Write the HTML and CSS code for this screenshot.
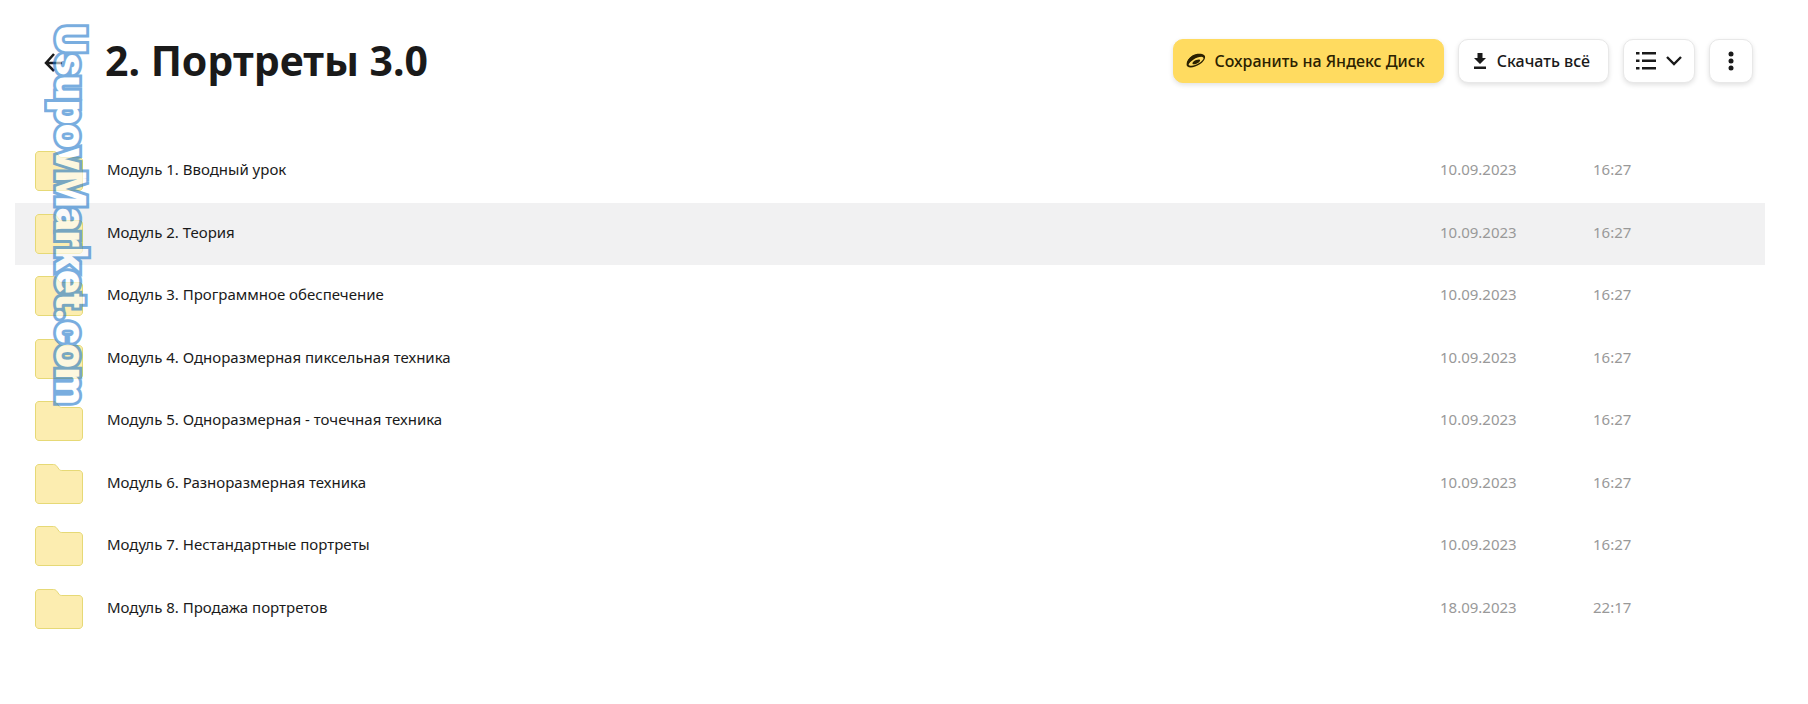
FILE: index.html
```html
<!DOCTYPE html>
<html lang="ru">
<head>
<meta charset="UTF-8">
<title>2. Портреты 3.0</title>
<link rel="stylesheet" href="styles.css">
</head>
<body>

<svg class="sprite" aria-hidden="true">
    <symbol id="folder" viewBox="0 0 50 42">
        <path d="M5 1.500h14.500c1.500 0 2.500.6 3.300 1.700l2.200 3c.7 1 1.600 1.300 2.800 1.300H45c2 0 3.500 1.500 3.500 3.500v26c0 2-1.500 3.500-3.500 3.500H5c-2 0-3.500-1.500-3.500-3.500V5C1.500 3 3 1.500 5 1.500z" fill="#fcedb0" stroke="#e6d976"/>
    </symbol>
</svg>

<header class="header">
    <a class="back" href="#" aria-label="Назад">
        <svg width="22" height="22" viewBox="0 0 22 22" fill="none" stroke="#1a1a1a" stroke-width="2.500"><path d="M11 4L3 13l8 8M3 13h16"/></svg>
    </a>
    <h1 class="title">2. Портреты 3.0</h1>
    <div class="actions">
        <button class="btn btn-save" type="button">
            <svg width="20" height="16" viewBox="0 0 20 16"><path fill="#2b2100" fill-rule="evenodd" d="M6.500 2.500C10 .6 15.500 0 18.300 2.300c2.200 2-.3 6.200-4.500 9C9.500 14.200 4 15.400 1.500 13.600-.7 12 1 5.500 6.500 2.500zM3 12.200c2 1.300 6.300.4 9.800-1.900 3.600-2.300 5.600-4.600 4.400-5.900-1.300-1.400-6-.3-9.600 2C4 8.700 1.800 11.100 3 12.200z"/><path fill="#2b2100" d="M6.500 10.800c-.5-1.200 1.300-2.700 3.500-3.700 2.300-1 4.300-.8 4.100.3-.2 1.300-2.100 2.800-4.200 3.500-1.600.6-3 .6-3.400-.1z"/><path fill="#2b2100" d="M1.200 10C2 5 7 1.500 12 1.200l4 2.200C10 3 5 6 3 10.500z"/></svg>
            Сохранить на Яндекс Диск
        </button>
        <button class="btn btn-load" type="button">
            <svg width="14" height="16" viewBox="0 0 14 16" fill="#1a1a1a"><path d="M4.500 0h5v5H13l-6 6-6-6h3.500zM1 13.500h12V16H1z"/></svg>
            Скачать всё
        </button>
        <button class="btn btn-view" type="button" aria-label="Вид списка">
            <svg width="20" height="18" viewBox="0 0 20 18" fill="#1a1a1a"><path d="M0 0h3.500v2.500H0zM6 0h14v2.500H6zM0 7.500h3.500V10H0zM6 7.500h14V10H6zM0 15h3.500v2.500H0zM6 15h14v2.500H6z"/></svg>
            <svg width="16" height="10" viewBox="0 0 16 10" fill="none" stroke="#1a1a1a" stroke-width="2.400"><path d="M1 1l7 7 7-7"/></svg>
        </button>
        <button class="btn btn-more" type="button" aria-label="Ещё">
            <svg width="6" height="20" viewBox="0 0 6 20" fill="#1a1a1a"><circle cx="3" cy="3" r="2.500"/><circle cx="3" cy="10" r="2.500"/><circle cx="3" cy="17" r="2.500"/></svg>
        </button>
    </div>
</header>

<table class="files">
    <tbody>
        <tr><td class="icon"><svg width="50" height="42"><use href="#folder"/></svg></td><td class="name">Модуль 1. Вводный урок</td><td class="date">10.09.2023</td><td class="time">16:27</td></tr>
        <tr class="active"><td class="icon"><svg width="50" height="42"><use href="#folder"/></svg></td><td class="name">Модуль 2. Теория</td><td class="date">10.09.2023</td><td class="time">16:27</td></tr>
        <tr><td class="icon"><svg width="50" height="42"><use href="#folder"/></svg></td><td class="name">Модуль 3. Программное обеспечение</td><td class="date">10.09.2023</td><td class="time">16:27</td></tr>
        <tr><td class="icon"><svg width="50" height="42"><use href="#folder"/></svg></td><td class="name">Модуль 4. Одноразмерная пиксельная техника</td><td class="date">10.09.2023</td><td class="time">16:27</td></tr>
        <tr><td class="icon"><svg width="50" height="42"><use href="#folder"/></svg></td><td class="name">Модуль 5. Одноразмерная - точечная техника</td><td class="date">10.09.2023</td><td class="time">16:27</td></tr>
        <tr><td class="icon"><svg width="50" height="42"><use href="#folder"/></svg></td><td class="name">Модуль 6. Разноразмерная техника</td><td class="date">10.09.2023</td><td class="time">16:27</td></tr>
        <tr><td class="icon"><svg width="50" height="42"><use href="#folder"/></svg></td><td class="name">Модуль 7. Нестандартные портреты</td><td class="date">10.09.2023</td><td class="time">16:27</td></tr>
        <tr><td class="icon"><svg width="50" height="42"><use href="#folder"/></svg></td><td class="name">Модуль 8. Продажа портретов</td><td class="date">18.09.2023</td><td class="time">22:17</td></tr>
    </tbody>
</table>

<div class="watermark">UsupovMarket.com</div>

</body>
</html>
```
FILE: styles.css
```css
body {
    margin: 0;
    padding: 36px 43px 72px 15px;
    font-family: "Noto Sans", "Open Sans", sans-serif;
    font-size: 15px;
    color: #1a1a1a;
    background: #fff;
}
.sprite {
    position: absolute;
    width: 0;
    height: 0;
}

/* Header */
.header {
    display: flex;
    align-items: center;
    height: 50px;
    padding: 0 12px 0 28px;
    margin-bottom: 54px;
}
.back {
    display: flex;
    width: 62px;
}
.title {
    flex: 1;
    margin: 0;
    font-size: 41px;
    line-height: 48px;
    padding-bottom: 2px;
    font-weight: 700;
}
.actions {
    display: flex;
    gap: 14px;
}
.btn {
    display: flex;
    align-items: center;
    justify-content: center;
    box-sizing: border-box;
    height: 44px;
    padding: 0 18px 0 12px;
    border: 1px solid #e8e8e8;
    border-radius: 10px;
    background: #fff;
    box-shadow: 0 2px 5px rgba(0, 0, 0, 0.12);
    font-family: inherit;
    font-size: 16px;
    font-weight: 500;
    color: #1a1a1a;
    white-space: nowrap;
    cursor: pointer;
}
.btn-save {
    gap: 8px;
    border-color: #ffdb60;
    background: #ffdb60;
    color: #2b2100;
}
.btn-load {
    gap: 10px;
    padding-left: 14px;
}
.btn-view {
    gap: 10px;
    width: 72px;
    padding: 0;
}
.btn-more {
    width: 44px;
    padding: 0;
}

/* File list */
.files {
    width: 100%;
    height: 500px;
    border-collapse: collapse;
    table-layout: fixed;
}
.files td {
    padding: 0 0 4px;
}
.files .active {
    background: #f1f1f2;
}
.files .icon {
    width: 73px;
    padding: 0 0 0 19px;
}
.icon svg {
    display: block;
}
.files .date {
    width: 153px;
    color: #999;
}
.files .time {
    width: 172px;
    color: #999;
}

/* Vertical site mark over the list */
.watermark {
    position: absolute;
    top: 25px;
    left: 45px;
    writing-mode: vertical-rl;
    font-family: Roboto, sans-serif;
    font-size: 43px;
    line-height: 52px;
    font-weight: 900;
    color: #fff;
    -webkit-text-stroke: 6px #2178cb;
    paint-order: stroke fill;
    stroke-linejoin: round;
    opacity: 0.6;
    pointer-events: none;
}
```
